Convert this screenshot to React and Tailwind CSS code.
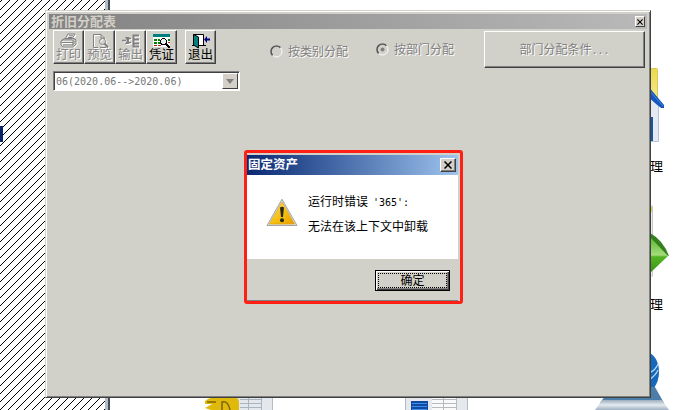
import React from 'react';

const etched = '[text-shadow:1px_1px_0_#ffffff]';

const Hatch = () => (
  <svg className="block h-[410px] w-[105px]" shapeRendering="crispEdges">
    <defs>
      <pattern id="hatch" width="8" height="8" patternUnits="userSpaceOnUse">
        {[0, 1, 2, 3, 4, 5, 6, 7].map(i => (
          <rect key={i} x={(9 - i) % 8} y={i} width="1" height="1" fill="#000" />
        ))}
      </pattern>
    </defs>
    <rect width="105" height="410" fill="url(#hatch)" />
  </svg>
);

const PrinterIcon = () => (
  <svg width="18" height="16" viewBox="0 0 18 16" fill="none" stroke="#808080">
    <path d="M5 6L8 1H15L12 6Z" fill="#eee" />
    <path d="M9 2.8H13M8 4.5H12" />
    <path d="M2 7L5 5.5H14L16 7V11L13 14H3L1 12V8L3 7H13L16 6.5M1.5 9.5H13L16 8M3 12H12L15 10" />
    <path d="M13 7V13" />
  </svg>
);

const PreviewIcon = () => (
  <svg width="18" height="16" viewBox="0 0 18 16" fill="none" stroke="#808080">
    <path d="M7 14.5H2.5V1.5H10L13.5 5V6M10 1.5V5H13.5" />
    <circle cx="11.5" cy="8.5" r="3" />
    <path d="M13.5 10.5L17 14.5" strokeWidth="2" />
    <path d="M9 14.5H15" />
  </svg>
);

const ExportIcon = () => (
  <svg width="18" height="16" viewBox="0 0 18 16" fill="none" stroke="#808080">
    <path d="M0 7.5H4M7 5.5H9M7 9.5H9" strokeWidth="1.5" />
    <path d="M3 4L7 4V11H3L5 7.5Z" fill="#808080" stroke="none" />
    <path d="M17 2.5H11.5V13.5H17M11 6.5H17M11 10.5H17" strokeWidth="2" />
  </svg>
);

const VoucherIcon = () => (
  <svg width="18" height="16" viewBox="0 0 18 16" shapeRendering="crispEdges">
    <rect x="0" y="1" width="17" height="13" fill="#fff" />
    <rect x="0" y="1" width="17" height="3" fill="#008080" />
    <path d="M1 6h3v2H1zM5 6h2v2H5zM1 9h3v2H1zM5 9h2v2H5zM15 6h2v2h-2z" fill="#008000" />
    <path d="M1 12h3v1H1zM5 12h3v1H5zM15 9h2v1h-2z" fill="#b02020" />
    <circle cx="10.5" cy="8.5" r="3" fill="#e8f4f4" stroke="#000" />
    <path d="M12.5 10.5L17 15" stroke="#000" strokeWidth="2" />
  </svg>
);

const ExitIcon = () => (
  <svg width="18" height="16" viewBox="0 0 18 16" fill="none" stroke="#000">
    <path d="M1.5 12.5V1.5H11.5V12.5H6" fill="#fff" />
    <path d="M1.5 1.5L6.5 4V15L1.5 12Z" fill="#008080" />
    <path d="M0 12.5H2M11 12.5H14" />
    <path d="M12 6.5L15 3V10Z" fill="#000080" stroke="none" />
    <path d="M14 6.5H18" stroke="#000080" strokeWidth="2" />
  </svg>
);

const WarningIcon = () => (
  <svg className="shrink-0" width="32" height="29" viewBox="0 0 32 29">
    <defs>
      <linearGradient id="amber" x1="0" y1="0" x2="1" y2="1">
        <stop offset="0" stopColor="#ffe16a" />
        <stop offset="0.5" stopColor="#f7c313" />
        <stop offset="1" stopColor="#e89d00" />
      </linearGradient>
    </defs>
    <path d="M16 1.2L31 27.5H1Z" fill="#ddd" stroke="#a5a5a5" strokeLinejoin="round" />
    <path d="M16 4L28.5 26H3.5Z" fill="url(#amber)" stroke="#d8a000" strokeWidth="0.6" />
    <path d="M14 9.5Q16 8 18 9.5L17 19H15Z" fill="#282818" />
    <circle cx="16" cy="22.3" r="2" fill="#282818" />
  </svg>
);

const CloseIcon = ({ size }) => (
  <svg width={size} height={size} viewBox="0 0 8 8" stroke="#000" strokeWidth="1.5">
    <path d="M0.5 0.5L7.5 7.5M7.5 0.5L0.5 7.5" />
  </svg>
);

// Shortcuts of the main program, mostly hidden behind the form
const DesktopIcons = () => (
  <svg className="absolute inset-0" width="682" height="410" viewBox="0 0 682 410">
    <defs>
      <linearGradient id="green" x1="0" y1="0" x2="0" y2="1">
        <stop offset="0" stopColor="#55b82c" />
        <stop offset="0.5" stopColor="#a5dc7c" />
        <stop offset="0.55" stopColor="#55b425" />
        <stop offset="1" stopColor="#38940f" />
      </linearGradient>
      <linearGradient id="steel" x1="0" y1="0" x2="0" y2="1">
        <stop offset="0" stopColor="#9dadbc" />
        <stop offset="0.5" stopColor="#e5eaf0" />
        <stop offset="1" stopColor="#a1b1c1" />
      </linearGradient>
      <linearGradient id="yellow" x1="0" y1="0" x2="0" y2="1">
        <stop offset="0" stopColor="#ecd84d" />
        <stop offset="1" stopColor="#f8eea0" />
      </linearGradient>
    </defs>
    <rect x="640" y="68.5" width="17.5" height="40" rx="1" fill="url(#yellow)" stroke="#dcc850" />
    <path d="M645 93L658.5 106V141.5H645Z" fill="#e5e9f1" stroke="#b9c3d5" />
    <rect x="648" y="117" width="5" height="24" fill="#1556a8" />
    <path d="M648 86L664 105V108H661L648 97Z" fill="#1558bd" />
    <path d="M648 89L663 106" stroke="#4587dc" />

    <path d="M650 206H652.5V276H650" fill="#eee" stroke="#c9c9c9" />
    <rect x="650" y="207" width="2" height="5" fill="#d4dc35" />
    <path d="M650 233Q663 240 669 256L650 250Z" fill="#347f1e" />
    <path d="M650 237L668 256L650 273Z" fill="url(#green)" />

    <path d="M645 350Q659 356 659 372Q659 381 654 388H645Z" fill="#1769bb" />
    <path d="M649 373Q656 370 658 364M649 380Q656 375 658 370" stroke="#b6dcff" strokeWidth="1.2" fill="none" />
    <path d="M605 396H650V387H655L664 403H600Z" fill="#4c7eaa" />
    <path d="M602 400H662L669 410H595Z" fill="url(#steel)" />

    <path d="M238 390H272.5V412H238Z" fill="#e4e8ed" stroke="#b4bcc5" />
    <path d="M240 399.5H262M240 403.5H262M240 407.5H262M248.5 398V410M261.5 398V410" stroke="#a9b4c0" />
    <path d="M205 401Q210 397 216 397H234Q239 398 239 403V410H211L205 408L212 404H205Z" fill="#dfb90c" />
    <path d="M222 410V402Q228 400 230 410M207 402H216" stroke="#816500" strokeWidth="1.5" fill="none" />

    <rect x="405.5" y="390.5" width="62" height="22" fill="#e5e8ec" stroke="#b3bcc5" />
    <path d="M432 398H456V410H432Z" fill="#fafafa" />
    <path d="M432 399.5H457M432 403.5H457M432 407.5H457M443.5 398V410M456.5 398V410" stroke="#b6bbc0" />
    <rect x="411" y="401" width="17" height="10" fill="#104ba0" />
    <path d="M412 403.5H427M412 406.5H427M412 409.5H427" stroke="#3b8ee9" />
  </svg>
);

const ToolButton = ({ icon, label, disabled }) => (
  <button
    className={`flex h-[34px] w-[31px] flex-col items-center border border-t-white border-l-white border-r-[#404040] border-b-[#404040] pt-[2px] shadow-[inset_-1px_-1px_0_#808080] ${
      disabled ? `text-[#858585] ${etched}` : 'text-black'
    }`}
  >
    <span className={disabled ? 'drop-shadow-[1px_1px_0_#ffffff]' : ''}>{icon}</span>
    <span className="-mt-[1px] whitespace-nowrap text-[12.5px] leading-[14px]">{label}</span>
  </button>
);

const Radio = ({ label, checked }) => (
  <label className="flex h-4 items-center gap-[5px]">
    <svg width="13" height="13" viewBox="0 0 13 13" fill="none">
      <circle cx="6.5" cy="6.5" r="5.5" stroke="#fff" />
      <path d="M2.6 10.4A5.5 5.5 0 0 1 10.4 2.6" stroke="#555" strokeWidth="1.6" />
      {checked && <circle cx="6.5" cy="6.5" r="2" fill="#808080" />}
    </svg>
    <span className={`pt-[2px] whitespace-nowrap text-[12px] leading-4 text-[#808080] ${etched}`}>{label}</span>
  </label>
);

const AllocationForm = () => (
  <div className="absolute top-[10px] left-[45px] h-[388px] w-[606px] border border-t-[#d4d0c8] border-l-[#d4d0c8] border-r-[#404040] border-b-[#404040] bg-[#d2d1c9] p-[3px] shadow-[inset_1px_1px_0_#ffffff,inset_-1px_-1px_0_#808080]">
    <div className="flex h-[15px] items-center justify-between bg-linear-to-r from-[#828282] to-[#b9b9b9] pr-[2px]">
      <span className="pl-[2px] text-[13px] leading-[15px] font-bold text-[#d4d0c8]">折旧分配表</span>
      <button className="flex h-[11px] w-[10px] items-center justify-center border border-t-white border-l-white border-r-[#404040] border-b-[#404040] bg-[#d4d0c8]">
        <CloseIcon size={6} />
      </button>
    </div>

    <div className="flex h-[38px] items-start pt-[1px] pl-1">
      <div className="flex">
        <ToolButton icon={<PrinterIcon />} label="打印" disabled />
        <ToolButton icon={<PreviewIcon />} label="预览" disabled />
        <ToolButton icon={<ExportIcon />} label="输出" disabled />
        <ToolButton icon={<VoucherIcon />} label="凭证" />
      </div>
      <div className="ml-2">
        <ToolButton icon={<ExitIcon />} label="退出" />
      </div>
      <div className="mt-[13px] ml-[54px]">
        <Radio label="按类别分配" />
      </div>
      <div className="mt-[11px] ml-[28px]">
        <Radio label="按部门分配" checked />
      </div>
      <button className={`mt-[1px] mr-[2px] ml-auto h-[37px] w-[161px] shrink-0 border border-t-white border-l-white border-r-[#404040] border-b-[#404040] text-[12px] text-[#808080] shadow-[inset_-1px_-1px_0_#808080] ${etched}`}>
        部门分配条件<span className="font-['DejaVu_Sans_Mono'] text-[10px]">...</span>
      </button>
    </div>

    <div className="mt-1 ml-1 flex h-[20px] w-[187px] items-center justify-between border border-t-[#808080] border-l-[#808080] border-r-white border-b-white bg-white p-[1px] shadow-[inset_1px_1px_0_#404040]">
      <span className="pl-[1px] font-['DejaVu_Sans_Mono'] text-[10px] whitespace-pre text-[#777777]">
        06(2020.06--&gt;2020.06)
      </span>
      <button className="flex h-4 w-4 items-center justify-center border border-t-white border-l-white border-r-[#404040] border-b-[#404040] bg-[#d4d0c8]">
        <svg width="8" height="5">
          <path d="M0 0H8L4 5Z" fill="#808080" />
        </svg>
      </button>
    </div>
  </div>
);

const ErrorDialog = () => (
  <div className="absolute top-[150px] left-[244px] flex h-[154px] w-[219px] flex-col rounded-[3px] border-[3px] border-[#ff2015] bg-[#d2d1c9] pt-[2px] pr-[2px]">
    <div className="flex h-[20px] shrink-0 items-center justify-between bg-linear-to-r from-[#0b2873] to-[#9fc4ed] pr-[2px]">
      <span className="pl-[1px] text-[12.5px] leading-5 font-bold text-white">固定资产</span>
      <button className="flex h-[14px] w-4 items-center justify-center border border-t-white border-l-white border-r-[#404040] border-b-[#404040] bg-[#d4d0c8] shadow-[inset_-1px_-1px_0_#808080]">
        <CloseIcon size={8} />
      </button>
    </div>
    <div className="flex h-[84px] shrink-0 gap-[10px] bg-white pt-[15px] pl-[19px]">
      <div className="pt-[8px]">
        <WarningIcon />
      </div>
      <div className="text-[12px] leading-6 whitespace-nowrap text-black">
        <p>
          运行时错误<span className="ml-[5px] font-['DejaVu_Sans_Mono'] text-[10px]">'365':</span>
        </p>
        <p>无法在该上下文中卸载</p>
      </div>
    </div>
    <div className="flex grow items-start justify-end border-b border-[#808080] pt-[11px] pr-2">
      <button className="h-[21px] w-[75px] border border-black p-[2px] shadow-[inset_1px_1px_0_#ffffff,inset_-1px_-1px_0_#404040,inset_-2px_-2px_0_#808080]">
        <span className="flex h-full items-center justify-center border border-dotted border-black text-[12px] leading-none">
          确定
        </span>
      </button>
    </div>
  </div>
);

const App = () => (
  <div className="relative h-[410px] w-[682px] overflow-hidden bg-white font-['Liberation_Sans','Noto_Sans_CJK_SC',sans-serif]">
    <div className="flex w-[110px] border-r-2 border-[#45505a] bg-white">
      <Hatch />
      <div className="w-[3px] bg-[#b4bdc6]" />
    </div>
    <div className="absolute top-[126px] left-0 h-4 w-[3px] bg-[#0a246a]" />
    <DesktopIcons />
    <span className="absolute top-[158px] left-[650px] text-[13px] leading-[18px]">理</span>
    <span className="absolute top-[296px] left-[650px] text-[13px] leading-[18px]">理</span>
    <AllocationForm />
    <ErrorDialog />
  </div>
);

export default App;
